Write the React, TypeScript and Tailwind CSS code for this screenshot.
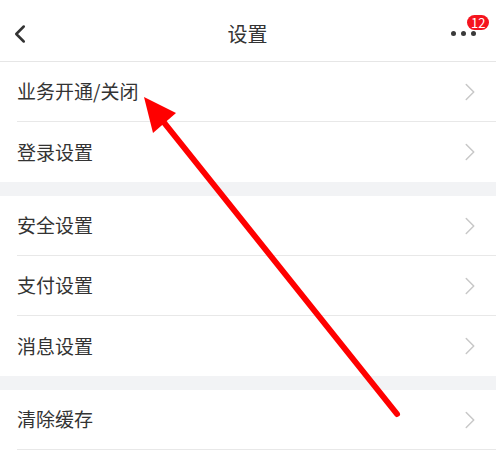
import { ChevronLeft, ChevronRight } from "lucide-react";

const groups: string[][] = [
  ["业务开通/关闭", "登录设置"],
  ["安全设置", "支付设置", "消息设置"],
  ["清除缓存"],
];

function Row({ label, last }: { label: string; last: boolean }) {
  return (
    <div className="pl-[17px]">
      <div
        className={
          "h-[60px] flex items-center justify-between pr-[11px] " +
          (last ? "" : "border-b border-[#e8e8e8]")
        }
      >
        <span className="text-[19px] text-[#333333]">{label}</span>
        <ChevronRight className="w-[30px] h-[30px] text-[#c8c8c8]" strokeWidth={1.2} />
      </div>
    </div>
  );
}

export default function App() {
  return (
    <div
      className="relative w-[496px] h-[458px] bg-white overflow-hidden"
      style={{ fontFamily: '"Noto Sans CJK SC", "Noto Sans", sans-serif' }}
    >
      {/* 顶部导航 */}
      <div className="h-[62px] pt-[6px] flex items-center justify-between pl-[5px] pr-[20px] border-b border-[#e6e6e6]">
        <ChevronLeft className="w-[30px] h-[30px] text-[#333333]" strokeWidth={2} />
        <span className="ml-[10px] text-[20px] text-[#333333]">设置</span>
        <div className="relative w-[26px] h-[26px] flex items-center justify-center gap-[5px]">
          <span className="w-[5px] h-[5px] rounded-full bg-[#3a3a3a]" />
          <span className="w-[5px] h-[5px] rounded-full bg-[#3a3a3a]" />
          <span className="w-[5px] h-[5px] rounded-full bg-[#3a3a3a]" />
          <span className="absolute -top-[6px] left-[17px] h-[15px] px-[4px] rounded-full bg-[#f5141e] text-white text-[13px] leading-[15px]">
            12
          </span>
        </div>
      </div>

      {groups.map((g, gi) => (
        <div key={gi}>
          {gi > 0 && <div className="h-[14px] bg-[#f2f3f5]" />}
          {g.map((label, i) => (
            <Row key={label} label={label} last={i === g.length - 1 && gi !== groups.length - 1} />
          ))}
        </div>
      ))}

      {/* 红色箭头 */}
      <svg className="absolute inset-0 pointer-events-none" width="496" height="458">
        <line x1="397" y1="414" x2="162" y2="120" stroke="#ff0000" strokeWidth="6" strokeLinecap="round" />
        <polygon points="144,97 153,133 176,113" fill="#ff0000" />
      </svg>
    </div>
  );
}
